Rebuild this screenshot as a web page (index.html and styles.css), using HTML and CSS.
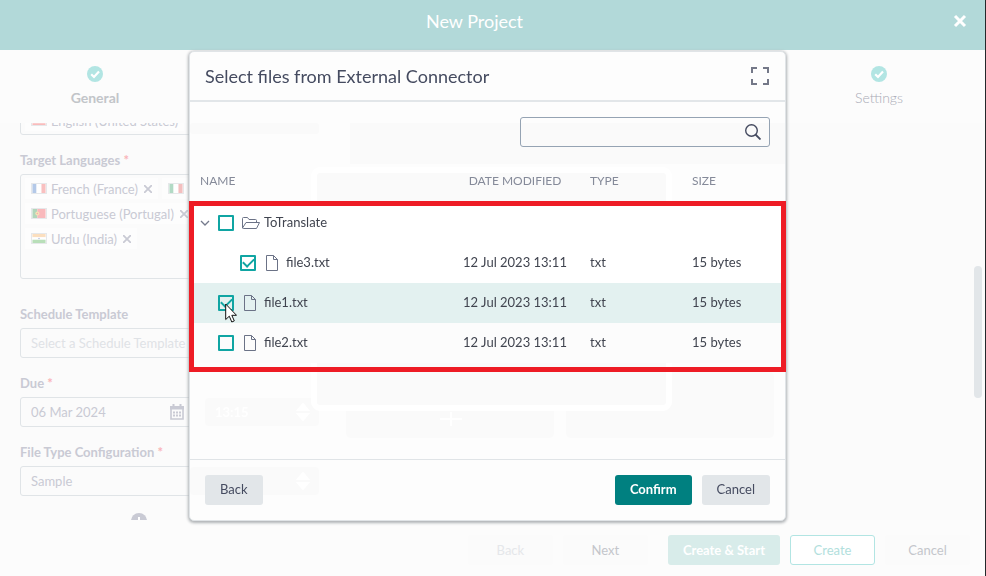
FILE: index.html
```html
<!DOCTYPE html>
<html lang="en">
<head>
<meta charset="utf-8">
<title>New Project</title>
<link rel="stylesheet" href="styles.css">
</head>
<body>
<svg class="defs" aria-hidden="true">
  <symbol id="done" viewBox="0 0 16 16"><circle cx="8" cy="8" r="8" fill="#b2e5e3"/><path d="M4.2 8.2 7 11l5-5.4" fill="none" stroke="#fff" stroke-width="2.2"/></symbol>
  <symbol id="file" viewBox="0 0 18 18"><path d="M2.500 1.500h7l4 4v11h-11zM9.500 1.500v4h4" fill="none" stroke="#6b7286" stroke-linejoin="round"/></symbol>
  <symbol id="x" viewBox="0 0 8 8"><path d="m0 0 8 8M8 0 0 8" stroke="currentColor" stroke-width="1.800"/></symbol>
</svg>
<div class="page">
  <header class="topbar">
    <h1>New Project</h1>
    <button class="close" aria-label="Close"><svg viewBox="0 0 14 14"><path d="m2 2 10 10M12 2 2 12" stroke="#fff" stroke-width="3"/></svg></button>
  </header>
  <ol class="steps">
    <li class="current"><svg><use href="#done"/></svg>General</li>
    <li></li>
    <li></li>
    <li></li>
    <li><svg><use href="#done"/></svg>Settings</li>
  </ol>
  <main class="content">
    <form class="form">
      <div class="field">
        <div class="box tags"><span class="tag"><svg class="flag" viewBox="0 0 16 11"><path fill="#fff" d="M0 0h16v11H0z"/><path d="M0 1h16M0 4h16M0 7h16M0 10h16" stroke="#f9bcbc" stroke-width="2"/></svg>English (United States)</span></div>
      </div>
      <div class="field tall">
        <span class="label">Target Languages <i>*</i></span>
        <div class="box tags multi">
          <span class="tag"><svg class="flag" viewBox="0 0 16 11"><path fill="#b4c9e8" d="M0 0h5v11H0z"/><path fill="#fff" d="M5 0h6v11H5z"/><path fill="#f9c0c0" d="M11 0h5v11h-5z"/></svg>French (France)<svg class="remove"><use href="#x"/></svg></span>
          <span class="tag"><svg class="flag" viewBox="0 0 16 11"><path fill="#b2dac5" d="M0 0h5v11H0z"/><path fill="#fff" d="M5 0h6v11H5z"/><path fill="#f3bfbf" d="M11 0h5v11h-5z"/></svg></span>
          <span class="tag"><svg class="flag" viewBox="0 0 16 11"><path fill="#b2d6bb" d="M0 0h6v11H0z"/><path fill="#f9b9bc" d="M6 0h10v11H6z"/><circle cx="6" cy="5.500" r="2.500" fill="#f6e3b4"/><circle cx="6" cy="5.500" r="1" fill="#f5aeb0"/></svg>Portuguese (Portugal)<svg class="remove"><use href="#x"/></svg></span>
          <span class="tag"><svg class="flag" viewBox="0 0 16 11"><path fill="#fbdfbf" d="M0 0h16v4H0z"/><path fill="#fff" d="M0 4h16v3H0z"/><path fill="#b9dfb9" d="M0 7h16v4H0z"/><circle cx="8" cy="5.500" r="1" fill="#b9bfe0"/></svg>Urdu (India)<svg class="remove"><use href="#x"/></svg></span>
        </div>
      </div>
      <div class="field">
        <label for="schedule">Schedule Template</label>
        <input class="box" id="schedule" type="text" placeholder="Select a Schedule Template">
      </div>
      <div class="field">
        <label for="due">Due <i>*</i></label>
        <div class="box date">
          <input id="due" type="text" value="06 Mar 2024">
          <svg viewBox="0 0 14 16"><path d="M3.500 0v3M10.500 0v3" stroke="#c9cad4" stroke-width="2"/><path d="M1 3h12v12H1z" fill="none" stroke="#c9cad4" stroke-width="1.600"/><path d="M0 2h14v3.500H0z" fill="#c9cad4"/><path d="M3 8.500h8M3 11.500h8" stroke="#c9cad4" stroke-width="2" stroke-dasharray="2 1"/></svg>
        </div>
      </div>
      <div class="field">
        <label for="config">File Type Configuration <i>*</i></label>
        <input class="box" id="config" type="text" value="Sample">
      </div>
      <svg class="add" viewBox="0 0 16 16"><circle cx="8" cy="8" r="8" fill="#c9cad4"/><path d="M8 4v8M4 8h8" stroke="#fff" stroke-width="2"/></svg>
    </form>
    <div class="thumb"></div>
  </main>
  <footer class="actions">
    <button class="btn faint">Back</button>
    <button class="btn soft next">Next</button>
    <button class="btn start">Create &amp; Start</button>
    <button class="btn create">Create</button>
    <button class="btn soft">Cancel</button>
  </footer>
</div>

<div class="overlay">
  <section class="dialog" role="dialog" aria-labelledby="dialog-title">
    <svg class="traces" viewBox="0 0 595 468" aria-hidden="true">
      <g fill="#fafafa">
        <rect x="0" y="71" width="129" height="11" rx="3"/>
        <rect x="160" y="71" width="435" height="41"/>
        <rect x="124" y="118" width="355" height="240" rx="6"/>
        <rect x="156" y="340" width="208" height="46" rx="5"/>
        <rect x="376" y="320" width="208" height="66" rx="5"/>
        <rect x="15" y="346" width="114" height="28" rx="4"/>
        <rect x="0" y="415" width="129" height="28" rx="4"/>
      </g>
      <rect x="124" y="118" width="355" height="238" rx="6" fill="none" stroke="#fff" stroke-width="6"/>
      <path d="m108 358 5-6 5 6zm0 4 5 6 5-6zM108 427l5-6 5 6zm0 4 5 6 5-6zM250 367h22M261 360v14" fill="#fff" stroke="#fff" stroke-width="2"/>
      <text x="25" y="365" fill="#fff" font-weight="700">13:15</text>
    </svg>
    <header class="dialog-head">
      <h2 id="dialog-title">Select files from External Connector</h2>
      <button class="expand" aria-label="Full screen"><svg viewBox="0 0 18 18"><path d="M1 6V1h5M12 1h5v5M17 12v5h-5M6 17H1v-5" fill="none" stroke="#747888" stroke-width="2"/></svg></button>
    </header>
    <div class="dialog-body">
      <div class="search">
        <input type="text" aria-label="Search">
        <svg viewBox="0 0 16 16"><circle cx="6.500" cy="6.500" r="5.800" fill="none" stroke="#454b60" stroke-width="1.400"/><path d="m10.500 10.500 5 5" stroke="#454b60" stroke-width="1.800"/></svg>
      </div>
      <div class="listing">
        <table>
          <thead><tr><th class="name">NAME</th><th class="modified">DATE MODIFIED</th><th class="type">TYPE</th><th class="size">SIZE</th></tr></thead>
          <tbody>
            <tr><td><div class="entry"><svg class="caret" viewBox="0 0 10 10"><path d="m1 3 4 4 4-4" fill="none" stroke="#747a8c" stroke-width="1.300"/></svg><input type="checkbox" id="f0"><svg class="icon" viewBox="0 0 18 18"><path d="M.500 14V4.500q0-1 1-1h4l1.500 2h6.500q1 0 1 1v2M.500 14l3.500-5.500h13.500l-3 6H1.500q-1 0-1-.500" fill="none" stroke="#6b7286" stroke-linejoin="round"/></svg><label for="f0">ToTranslate</label></div></td><td></td><td></td><td></td></tr>
            <tr><td><div class="entry child"><span class="caret"></span><input type="checkbox" id="f3" checked><svg class="icon"><use href="#file"/></svg><label for="f3">file3.txt</label></div></td><td class="modified">12 Jul 2023 13:11</td><td>txt</td><td>15 bytes</td></tr>
            <tr class="active"><td><div class="entry"><span class="caret"></span><input type="checkbox" id="f1" checked><svg class="icon"><use href="#file"/></svg><label for="f1">file1.txt</label><svg class="pointer" viewBox="0 0 12 20"><path d="M.700 1v15.500l3.600-3.300 2.500 5.800 2.500-1.100-2.500-5.600h4.700z" fill="#fff" stroke="#111" stroke-width="1"/></svg></div></td><td class="modified">12 Jul 2023 13:11</td><td>txt</td><td>15 bytes</td></tr>
            <tr><td><div class="entry"><span class="caret"></span><input type="checkbox" id="f2"><svg class="icon"><use href="#file"/></svg><label for="f2">file2.txt</label></div></td><td class="modified">12 Jul 2023 13:11</td><td>txt</td><td>15 bytes</td></tr>
          </tbody>
        </table>
        <div class="highlight"></div>
      </div>
    </div>
    <footer class="dialog-foot">
      <button class="btn grey">Back</button>
      <button class="btn confirm">Confirm</button>
      <button class="btn grey">Cancel</button>
    </footer>
  </section>
</div>
</body>
</html>
```
FILE: styles.css
```css
* { box-sizing: border-box; }
body {
  margin: 0;
  font: 13px/20px Lato, "Liberation Sans", sans-serif;
  color: #c9cad4;
}
button, input { font: inherit; color: inherit; }
button { cursor: pointer; }
h1, h2 { margin: 0; font-weight: 400; }
.defs { position: absolute; width: 0; height: 0; }

.page {
  height: 100vh;
  display: flex;
  flex-direction: column;
  background: #fcfcfc;
  border-right: 1px solid #24282b;
  overflow: hidden;
}
.topbar {
  height: 50px;
  flex: none;
  display: grid;
  grid-template-columns: 1fr auto 1fr;
  align-items: center;
  padding: 0 18px 8px;
  background: #b2d9d9;
  color: #fff;
}
.topbar h1 { font-size: 18px; grid-column: 2; margin-right: 36px; }
.close { justify-self: end; border: 0; background: none; padding: 0; height: 14px; }
.close svg { width: 14px; height: 14px; display: block; }

.steps {
  flex: none;
  height: 73px;
  margin: 0 0 0 -3px;
  padding: 16px 8px 0 0;
  list-style: none;
  display: grid;
  grid-template-columns: repeat(5, 1fr);
  font-size: 14px;
}
.steps li {
  display: flex;
  flex-direction: column;
  align-items: center;
  gap: 6px;
  font-weight: 300;
  color: #a9abb6;
}
.steps .current { font-weight: 700; color: #c2c5c9; }
.steps svg { width: 16px; height: 16px; }

.content {
  flex: 1;
  min-height: 0;
  display: flex;
  justify-content: space-between;
  overflow: hidden;
  background: #fbfbfb;
}
.form { width: 300px; margin: -18px 0 0 20px; }
.field { display: flex; flex-direction: column; gap: 4px; margin-bottom: 15px; }
.field.tall { margin-bottom: 25px; }
.label, .field label { font-weight: 700; color: #c9cad4; }
.field i { font-style: normal; color: #f9b4b8; }
.box {
  height: 30px;
  border: 1px solid #e0e4e7;
  border-radius: 3px;
  padding: 0 10px;
  background: #fbfbfb;
  outline: 0;
}
.box::placeholder { color: #dfe2e6; opacity: 1; }
.tags { padding: 4px; display: flex; flex-wrap: wrap; align-content: flex-start; gap: 4px; }
.multi { height: 105px; padding: 3px 50px 3px 4px; }
.tag {
  display: flex;
  align-items: center;
  gap: 4px;
  height: 21px;
  padding: 0 6px;
  background: #fdfdfd;
}
.flag { width: 16px; height: 11px; border: 1px solid #e6e8ea; }
.remove { width: 8px; height: 8px; margin-left: 2px; }
.date { display: flex; align-items: center; padding-right: 135px; }
.date input { flex: 1; min-width: 0; border: 0; padding: 0; background: none; outline: 0; }
.date svg { width: 14px; height: 16px; }
.add { display: block; width: 16px; height: 16px; margin-left: 111px; margin-top: 17px; }
.thumb {
  width: 8px;
  height: 132px;
  margin: 143px 3px 0 0;
  border-radius: 4px;
  background: #e2e6e9;
}

.actions {
  flex: none;
  height: 56px;
  display: flex;
  justify-content: flex-end;
  align-items: center;
  gap: 10px;
  padding: 4px 15px 0 0;
}
.btn {
  height: 30px;
  border: 1px solid transparent;
  border-radius: 3px;
  padding: 0 14px 1px;
  background: none;
}
.actions .btn { min-width: 85px; background: #fbfbfb; }
.actions .faint { color: #e5e7ea; }
.actions .soft { color: #c4c6cb; }
.actions .next { margin-right: 10px; }
.actions .start { background: #d8ecea; color: #fff; font-weight: 700; }
.actions .create { border-color: #b2e5e3; color: #b2e0dd; background: #fff; }

.overlay {
  position: fixed;
  inset: 0 11px 0 0;
  display: flex;
  justify-content: center;
  align-items: center;
  padding-bottom: 5px;
}
.dialog {
  position: relative;
  width: 61%;
  min-width: 597px;
  display: flex;
  flex-direction: column;
  border: 1px solid #e0e4e7;
  border-radius: 5px;
  background: #fdfdfd;
  box-shadow: 0 1px 3px 1px #aeb2b5;
  color: #40444f;
}
.traces { position: absolute; inset: 0; width: 100%; height: 100%; }
.dialog-head, .dialog-body, .dialog-foot { position: relative; }
.dialog-head {
  display: flex;
  justify-content: space-between;
  align-items: center;
  height: 50px;
  padding: 0 16px 0 15px;
  border-bottom: 2px solid #e2e6e9;
}
.dialog-head h2 { font-size: 18px; color: #454b60; }
.expand { border: 0; background: none; padding: 0; height: 18px; }
.expand svg { display: block; width: 18px; height: 18px; }
.dialog-body { display: flex; flex-direction: column; padding: 15px 0 96px; }
.search {
  align-self: flex-end;
  width: 250px;
  height: 30px;
  margin-right: 15px;
  display: flex;
  align-items: center;
  padding: 0 8px;
  border: 1px solid #95a3b3;
  border-radius: 3px;
}
.search input { flex: 1; min-width: 0; border: 0; outline: 0; background: none; }
.search svg { width: 16px; height: 16px; }

.listing { position: relative; margin-top: 16px; }
table { width: 100%; table-layout: fixed; border-collapse: collapse; }
th, td { height: 40px; padding: 0 0 2px; text-align: left; font-weight: 400; }
td:first-child { padding-bottom: 0; }
th { color: #858a99; font-size: 12px; padding-bottom: 4px; }
.name { width: 265px; padding-left: 10px; }
.modified { width: 120px; text-align: center; }
.type { width: 102px; }
.type, .size, td:nth-child(3), td:nth-child(4) { padding-left: 15px; }
tbody tr { background: #fff; }
tbody tr:last-child { background: #fcfcfc; }
tbody .active { background: #e3f1f0; }
.entry { position: relative; display: flex; align-items: center; padding-left: 10px; }
.entry label { padding-bottom: 2px; }
.child { padding-left: 32px; }
.caret { width: 10px; height: 10px; margin-right: 8px; }
.icon { width: 18px; height: 18px; margin: 0 4px 0 8px; }
.entry input {
  appearance: none;
  width: 16px;
  height: 16px;
  margin: 0;
  border: 2px solid #10a5a3;
  border-radius: 1px;
  display: grid;
  place-items: center;
}
.entry input:checked::before {
  content: "";
  width: 9px;
  height: 5px;
  border: solid #10a5a3;
  border-width: 0 0 2px 2px;
  transform: translateY(-1px) rotate(-45deg);
}
.pointer { position: absolute; left: 35px; top: 11px; width: 12px; height: 20px; }
.highlight { position: absolute; inset: 38px -1px -9px -1px; border: 5px solid #ee1c25; pointer-events: none; }

.dialog-foot {
  height: 61px;
  display: flex;
  align-items: center;
  gap: 10px;
  padding: 0 15px;
  border-top: 1px solid #e0e4e7;
}
.dialog-foot .btn:first-child { margin-right: auto; }
.grey { background: #e2e6e9; color: #454b60; }
.confirm { background: #008080; color: #fff; font-weight: 700; }
```
